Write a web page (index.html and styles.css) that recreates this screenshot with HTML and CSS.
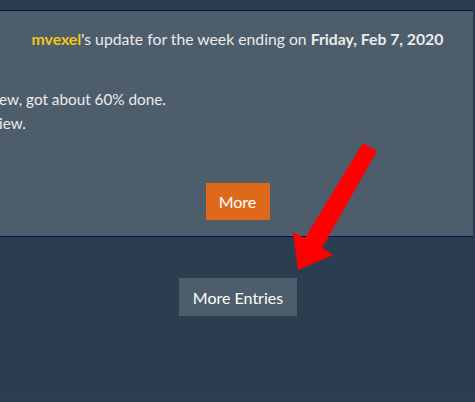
FILE: index.html
```html
<!DOCTYPE html>
<html>
<head>
<meta charset="utf-8">
<link rel="stylesheet" href="styles.css">
</head>
<body>
<div class="top-band"></div>
<section class="card">
  <h2 class="card-title"><span class="user">mvexel</span>'s update for the week ending on <b>Friday, Feb 7, 2020</b></h2>
  <div class="card-body">
    <p class="line line-1">ew, got about 60% done.</p>
    <p class="line line-2">iew.</p>
  </div>
  <div class="card-actions">
    <a class="btn btn-more" href="#">More</a>
  </div>
</section>
<div class="pager">
  <a class="btn btn-entries" href="#">More Entries</a>
</div>
<div class="footer-edge"></div>
<svg class="arrow" width="475" height="402" viewBox="0 0 475 402">
  <polygon points="363,143 377,151 322,248 333,255 298,270 293,232 305,238" fill="#ff0000"/>
</svg>
</body>
</html>
```
FILE: styles.css
```css
html, body {
  margin: 0;
  padding: 0;
}
body {
  background: #2b3e50;
  font-family: Lato, "Open Sans", sans-serif;
  color: #ebebeb;
  width: 475px;
  height: 402px;
  overflow: hidden;
  position: relative;
}
.top-band {
  height: 10px;
}
.card {
  background: #4e5d6c;
  border-top: 1px solid #160c46;
  border-bottom: 1px solid #160c46;
  height: 225px;
  display: flex;
  flex-direction: column;
  margin-right: 2px;
}
.card-title {
  margin: 0;
  padding-top: 18px;
  font-size: 15.75px;
  font-weight: 400;
  line-height: 20px;
  text-align: center;
  color: #ebebeb;
  padding-left: 2px;
}
.card-title b {
  font-weight: 700;
}
.user {
  color: #f5c518;
  font-weight: 700;
}
.card-body {
  padding-top: 38px;
}
.line {
  margin: 0;
  font-size: 15.3px;
  line-height: 24px;
  white-space: nowrap;
  margin-left: -1px;
}
.card-actions {
  display: flex;
  justify-content: center;
  padding-top: 48px;
  padding-left: 2px;
}
.btn {
  display: block;
  text-decoration: none;
  color: #ffffff;
  font-size: 16px;
  line-height: 21px;
  height: 21px;
}
.btn-more {
  background: #df691a;
  padding: 8px 13px;
  width: 38px;
  text-align: center;
}
.pager {
  display: flex;
  justify-content: center;
  align-items: flex-start;
  padding-top: 41px;
  padding-left: 1px;
  height: 118px;
}
.btn-entries {
  background: #4e5d6c;
  padding: 9px 13px 8px;
  width: 92px;
  text-align: center;
}
.footer-edge {
  border-top: 1px solid #2f4154;
}
.arrow {
  position: absolute;
  left: 0;
  top: 0;
  pointer-events: none;
}
```
